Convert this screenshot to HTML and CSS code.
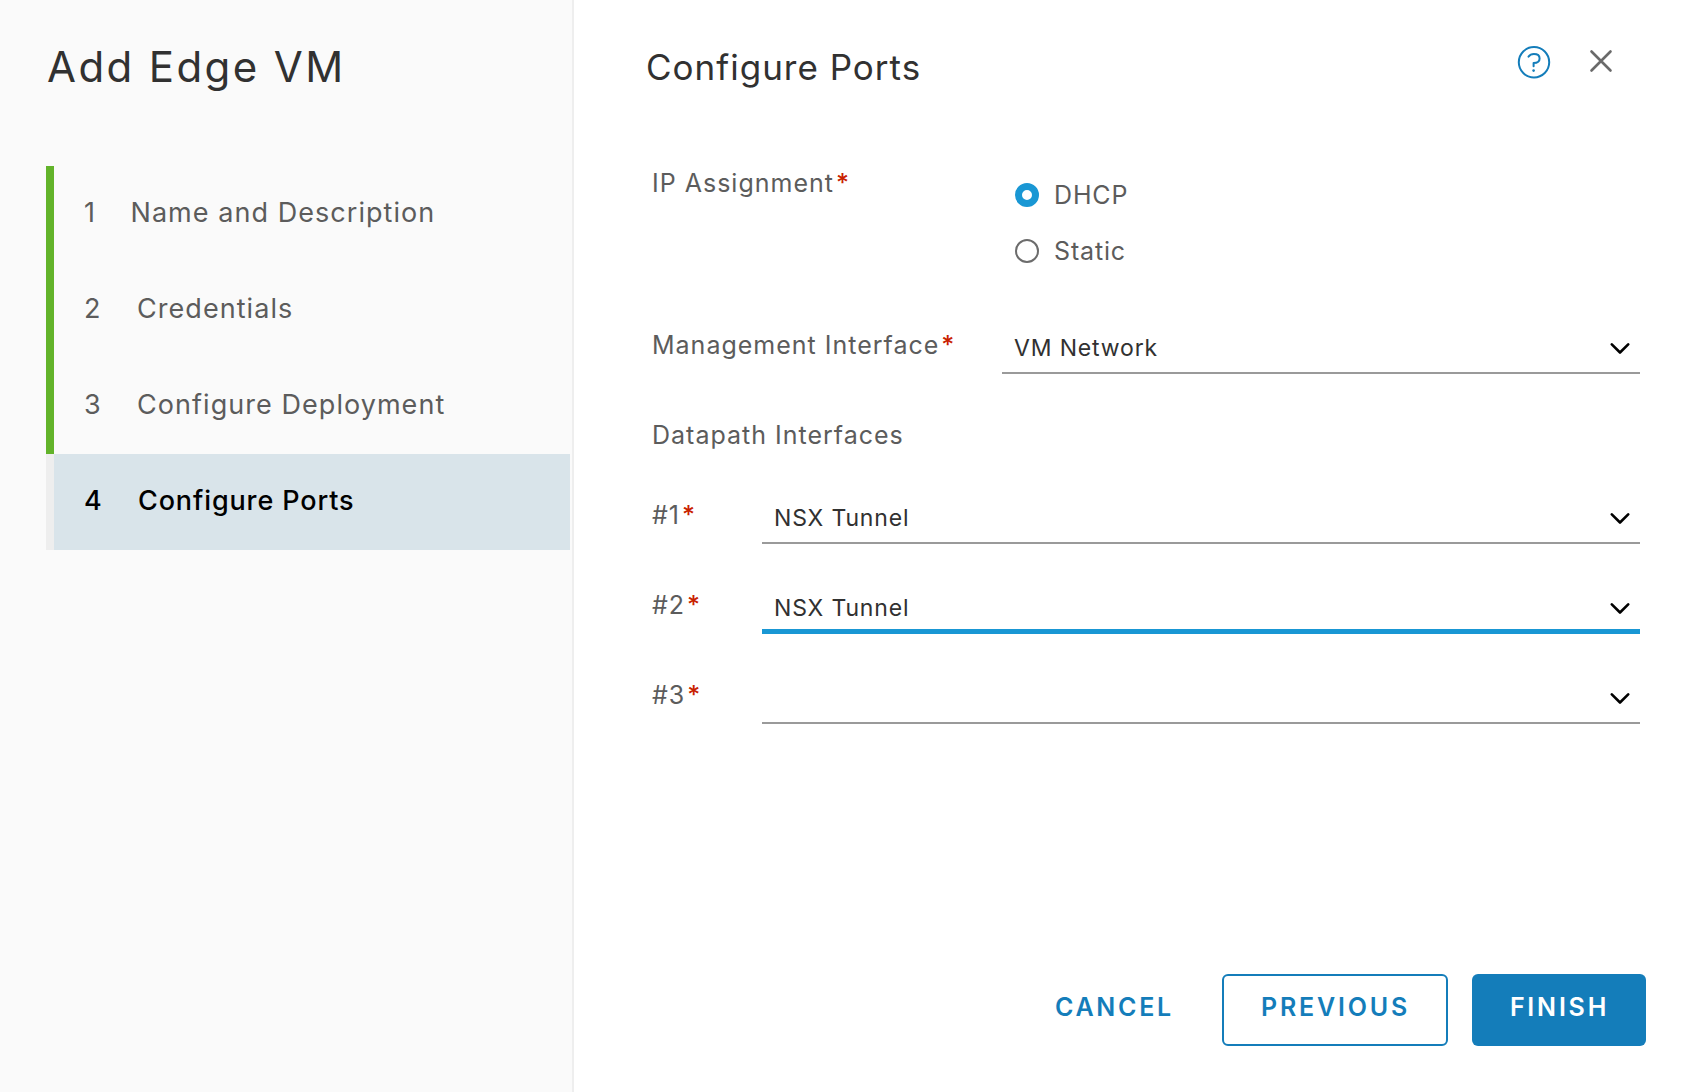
FILE: index.html
```
<!DOCTYPE html>
<html lang="en">
<head>
<meta charset="utf-8">
<title>Add Edge VM</title>
<link rel="stylesheet" href="styles.css">
</head>
<body>
<div class="wizard">
  <aside class="sidebar">
    <h1 class="sidebar-title">Add Edge VM</h1>
    <ol class="steps">
      <li class="step step-done step-first"><span class="step-num">1</span><span>Name and Description</span></li>
      <li class="step step-done"><span class="step-num">2</span><span>Credentials</span></li>
      <li class="step step-done"><span class="step-num">3</span><span>Configure Deployment</span></li>
      <li class="step step-active"><span class="step-num">4</span><span>Configure Ports</span></li>
    </ol>
  </aside>
  <main class="page">
    <header class="page-header">
      <h2 class="page-title">Configure Ports</h2>
      <div class="page-tools">
        <svg class="help" viewBox="0 0 34 34" width="34" height="34">
          <circle cx="17" cy="17.300" r="15.200"/>
          <path d="M11.500 11.600C12.800 9.900 14.600 9.100 16.900 9.100c3.400 0 5.700 1.700 5.700 4.400 0 2.900-2.300 4.500-6 4.600V21.300"/>
          <circle class="help-dot" cx="16.600" cy="25.600" r="1.300"/>
        </svg>
        <svg class="close" viewBox="0 0 24 24" width="24" height="24">
          <path d="M2.500 2.500 21.500 21.500M21.500 2.500 2.500 21.500"/>
        </svg>
      </div>
    </header>
    <form class="form">
      <div class="row row-ip">
        <div class="label">IP Assignment<span class="req">*</span></div>
        <div class="radios">
          <div class="radio-item"><span class="radio radio-on"></span><span>DHCP</span></div>
          <div class="radio-item"><span class="radio"></span><span>Static</span></div>
        </div>
      </div>
      <div class="row">
        <div class="label">Management Interface<span class="req">*</span></div>
        <div class="select"><span>VM Network</span><svg class="chevron" viewBox="0 0 20 14" width="20" height="14"><path d="M1.800 2.300 10 10.500 18.200 2.300"/></svg></div>
      </div>
      <div class="row row-heading"><div class="label">Datapath Interfaces</div></div>
      <div class="row row-port">
        <div class="label">#1<span class="req">*</span></div>
        <div class="select"><span>NSX Tunnel</span><svg class="chevron" viewBox="0 0 20 14" width="20" height="14"><path d="M1.800 2.300 10 10.500 18.200 2.300"/></svg></div>
      </div>
      <div class="row row-port">
        <div class="label">#2<span class="req">*</span></div>
        <div class="select select-focus"><span>NSX Tunnel</span><svg class="chevron" viewBox="0 0 20 14" width="20" height="14"><path d="M1.800 2.300 10 10.500 18.200 2.300"/></svg></div>
      </div>
      <div class="row row-port">
        <div class="label">#3<span class="req">*</span></div>
        <div class="select"><span></span><svg class="chevron" viewBox="0 0 20 14" width="20" height="14"><path d="M1.800 2.300 10 10.500 18.200 2.300"/></svg></div>
      </div>
    </form>
    <footer class="actions">
      <button class="btn btn-link" type="button">CANCEL</button>
      <button class="btn btn-outline" type="button">PREVIOUS</button>
      <button class="btn btn-primary" type="button">FINISH</button>
    </footer>
  </main>
</div>
</body>
</html>
```
FILE: styles.css
```
* { box-sizing: border-box; }

body {
  margin: 0;
  background: #fff;
  color: #5c5c5c;
  font-family: "Inter", "Liberation Sans", sans-serif;
  font-weight: 400;
}

.wizard {
  display: flex;
  width: 1690px;
  height: 1092px;
  overflow: hidden;
}

/* Sidebar */
.sidebar {
  width: 574px;
  flex: none;
  padding: 42px 2px 0 46px;
  background: #fafafa;
  border-right: 2px solid #eee;
}

.sidebar-title {
  margin: 0 0 74px 1px;
  font-size: 42px;
  font-weight: 400;
  line-height: 50px;
  letter-spacing: 2.4px;
  color: #313131;
  white-space: nowrap;
}

.steps {
  margin: 0;
  padding: 0;
  list-style: none;
}

.step {
  display: flex;
  align-items: center;
  height: 96px;
  padding: 0 0 4px 30px;
  border-left: 8px solid #eee;
  font-size: 27px;
  letter-spacing: 1.05px;
}

.step-done { border-left-color: #62b32a; }

.step-num { width: 53px; }
.step-first .step-num { width: 46.5px; }

.step-active {
  background: #d9e4ea;
  color: #000;
  font-weight: 500;
  letter-spacing: 0.88px;
}
.step-active .step-num { width: 54px; }

/* Page */
.page {
  flex: 1;
  display: flex;
  flex-direction: column;
  padding: 45px 44px 46px 72px;
}

.page-header {
  display: flex;
  justify-content: space-between;
  height: 122px;
}

.page-title {
  margin: 0;
  font-size: 35px;
  font-weight: 400;
  line-height: 45px;
  letter-spacing: 1px;
  color: #313131;
}

.page-tools {
  display: flex;
  align-items: flex-start;
  gap: 37.5px;
  margin-right: 33.5px;
}

.help {
  fill: none;
  stroke: #147dba;
  stroke-width: 2;
  stroke-linecap: round;
  stroke-linejoin: round;
}
.help-dot { fill: #147dba; stroke: none; }

.close {
  margin-top: 3.5px;
  fill: none;
  stroke: #6a6a6a;
  stroke-width: 2.6;
  stroke-linecap: round;
}

/* Form */
.form {
  flex: 1;
  margin: 0 6px;
}

.row {
  display: grid;
  grid-template-columns: 350px 1fr;
  align-items: start;
  height: 90px;
}
.row-ip { height: 159px; }
.row-heading { height: 80px; }
.row-port { grid-template-columns: 110px 1fr; }

.label {
  padding-top: 3px;
  font-size: 25px;
  line-height: 32px;
  letter-spacing: 1px;
  white-space: nowrap;
}
.row-ip .label { padding-top: 0; }

.req {
  margin-left: 2px;
  font-size: 25px;
  font-weight: 500;
  letter-spacing: 0;
  line-height: 1;
  color: #c92100;
}

.radios {
  display: grid;
  row-gap: 24px;
  padding: 12px 0 0 13px;
  font-size: 25px;
  line-height: 32px;
  letter-spacing: 0.85px;
}
.radio-item {
  display: flex;
  align-items: center;
  gap: 15px;
}
.radio {
  width: 24px;
  height: 24px;
  border: 2px solid #6c6c6c;
  border-radius: 50%;
}
.radio-on { border: 7.5px solid #1997d4; }

.select {
  display: flex;
  justify-content: space-between;
  height: 48px;
  padding: 0 10px 0 12px;
  border-bottom: 2px solid #9a9a9a;
  font-size: 23px;
  line-height: 45px;
  letter-spacing: 0.85px;
  color: #313131;
}
.row-port .select-focus {
  border-bottom: 5px solid #1997d4;
}

.chevron {
  margin-top: 16px;
  fill: none;
  stroke: #000;
  stroke-width: 2.6;
  stroke-linecap: round;
  stroke-linejoin: round;
}

/* Footer buttons */
.actions {
  display: flex;
  justify-content: flex-end;
  gap: 24px;
}

.btn {
  height: 72px;
  padding: 0 0 5px 1px;
  border: 2px solid transparent;
  border-radius: 6px;
  background: none;
  font-family: inherit;
  font-size: 25px;
  font-weight: 600;
  line-height: 63px;
  letter-spacing: 2.8px;
  color: #147dba;
}
.btn-link { width: 146px; letter-spacing: 2.69px; text-align: left; }
.btn-outline { width: 226px; border-color: #147dba; }
.btn-primary { width: 174px; background: #147dba; color: #fff; }
```
